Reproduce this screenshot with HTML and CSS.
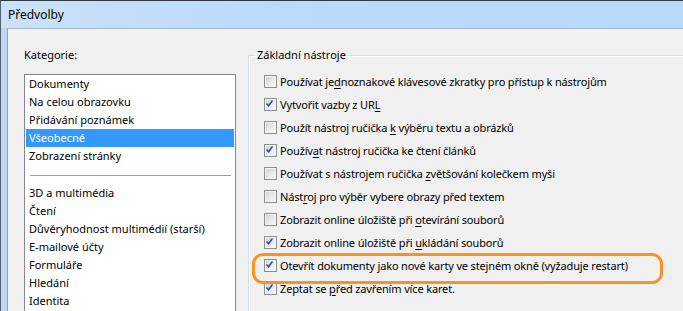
FILE: index.html
```html
<!DOCTYPE html>
<html lang="cs">
<head>
    <meta charset="UTF-8">
    <meta name="viewport" content="width=device-width, initial-scale=1.0">
    <title>Předvolby</title>
    <link rel="stylesheet" href="styles.css">
</head>
<body>
    <div class="window">
        <div class="titlebar">Předvolby</div>
        <div class="client">
            <!-- Category list -->
            <div class="categories">
                <div class="label">Kategorie:</div>
                <ul class="list">
                    <li>Dokumenty</li>
                    <li>Na celou obrazovku</li>
                    <li>Přidávání poznámek</li>
                    <li class="selected">Všeobecné</li>
                    <li>Zobrazení stránky</li>
                    <li class="separator"></li>
                    <li>3D a multimédia</li>
                    <li>Čtení</li>
                    <li>Důvěryhodnost multimédií (starší)</li>
                    <li>E-mailové účty</li>
                    <li>Formuláře</li>
                    <li>Hledání</li>
                    <li>Identita</li>
                </ul>
            </div>

            <!-- Basic tools group -->
            <fieldset class="group">
                <legend>Základní nástroje</legend>
                <label class="option"><span class="box"></span><span>Používat je<u>d</u>noznakové klávesové zkratky pro přístup k nástrojům</span></label>
                <label class="option"><span class="box checked"><svg viewBox="0 0 13 13"><path d="M3 6.5 L5.4 9.2 L10 3"/></svg></span><span>Vytvořit vazby z UR<u>L</u></span></label>
                <label class="option"><span class="box"></span><span>Použít nástroj ručička <u>k</u> výběru textu a obrázků</span></label>
                <label class="option"><span class="box checked"><svg viewBox="0 0 13 13"><path d="M3 6.5 L5.4 9.2 L10 3"/></svg></span><span>Použív<u>a</u>t nástroj ručička ke čtení článků</span></label>
                <label class="option"><span class="box"></span><span>Používat s nástrojem ručička <u>z</u>většování kolečkem myši</span></label>
                <label class="option"><span class="box"></span><span>Nást<u>r</u>oj pro výběr vybere obrazy před textem</span></label>
                <label class="option"><span class="box"></span><span>Zobrazit online úložiště při <u>o</u>tevírání souborů</span></label>
                <label class="option"><span class="box checked"><svg viewBox="0 0 13 13"><path d="M3 6.5 L5.4 9.2 L10 3"/></svg></span><span>Zobrazit online úložiště při <u>u</u>kládání souborů</span></label>
                <label class="option highlight"><span class="box checked"><svg viewBox="0 0 13 13"><path d="M3 6.5 L5.4 9.2 L10 3"/></svg></span><span>Otevřít dokumenty jako nové karty ve stejném okně (vyžaduje restart)</span></label>
                <label class="option"><span class="box checked"><svg viewBox="0 0 13 13"><path d="M3 6.5 L5.4 9.2 L10 3"/></svg></span><span>Zeptat se <u>p</u>řed zavřením více karet.</span></label>
            </fieldset>
        </div>
    </div>
</body>
</html>
```

FILE: styles.css
```css
* {
    box-sizing: border-box;
}
body {
    margin: 0;
    height: 311px;
    overflow: hidden;
    font-family: "Noto Sans", "Open Sans", sans-serif;
    font-size: 11px;
    color: #000;
}

/* Window frame */
.window {
    height: 311px;
    display: flex;
    flex-direction: column;
    border-left: 1px solid #4f5f70;
    border-top: 1px solid #2e3944;
    background: #bcd8f3;
}
.titlebar {
    height: 27px;
    line-height: 27px;
    padding-left: 7px;
    font-size: 12px;
    background: linear-gradient(90deg, #cce2f6 0, #bcdaf9 35%, #b9d9fb 100%);
}
.client {
    flex: 1;
    display: flex;
    gap: 12px;
    margin-left: 6px;
    padding: 18px 0 0 16px;
    background: #f0f0f0;
    border-left: 1px solid #8fa5bd;
    border-top: 1px solid #a8b9cb;
    min-height: 0;
}

/* Category list */
.categories {
    width: 212px;
    flex-shrink: 0;
    display: flex;
    flex-direction: column;
    margin-bottom: -30px;
}
.label {
    line-height: 16px;
    margin-bottom: 11px;
}
.list {
    flex: 1;
    margin: 0;
    padding: 0 1px;
    list-style: none;
    background: #fff;
    border: 1px solid #828790;
}
.list li {
    height: 18px;
    line-height: 18px;
    padding-left: 3px;
    white-space: nowrap;
}
.list li.selected {
    background: #3399ff;
    color: #fff;
}
.list li.separator {
    height: 19px;
    padding: 10px 3px 0 4px;
}
.list li.separator::before {
    content: "";
    display: block;
    height: 1px;
    background: #6ea4e4;
}

/* Group box */
.group {
    flex: 1;
    min-width: 0;
    margin: 0 -30px -30px 0;
    padding: 7px 0 0 0;
    border: 1px solid #d5dfe5;
    box-shadow: inset 1px 1px #fff;
}
.group legend {
    margin-left: 6px;
    padding: 0 2px;
    line-height: 16px;
}
.option {
    display: flex;
    align-items: center;
    gap: 3px;
    height: 23px;
    padding-left: 15px;
    white-space: nowrap;
    letter-spacing: -0.15px;
}
.option u {
    text-underline-offset: 2px;
}
.box {
    width: 13px;
    height: 13px;
    flex-shrink: 0;
    border: 1px solid #8e8f8f;
    background: linear-gradient(135deg, #cdd0d4 0, #e9eaec 55%, #fafafa 100%);
    box-shadow: inset 0 0 0 1px #f4f4f4;
}
.box svg {
    display: block;
    width: 11px;
    height: 11px;
    margin: -1px 0 0 -1px;
    overflow: visible;
}
.box path {
    fill: none;
    stroke: #2e4a9a;
    stroke-width: 1.8;
}

/* Annotation ring */
.highlight {
    position: relative;
}
.highlight::after {
    content: "";
    position: absolute;
    left: 3px;
    top: -1px;
    width: 405px;
    height: 25px;
    border: 3px solid #f7931e;
    border-radius: 11px;
}
```
